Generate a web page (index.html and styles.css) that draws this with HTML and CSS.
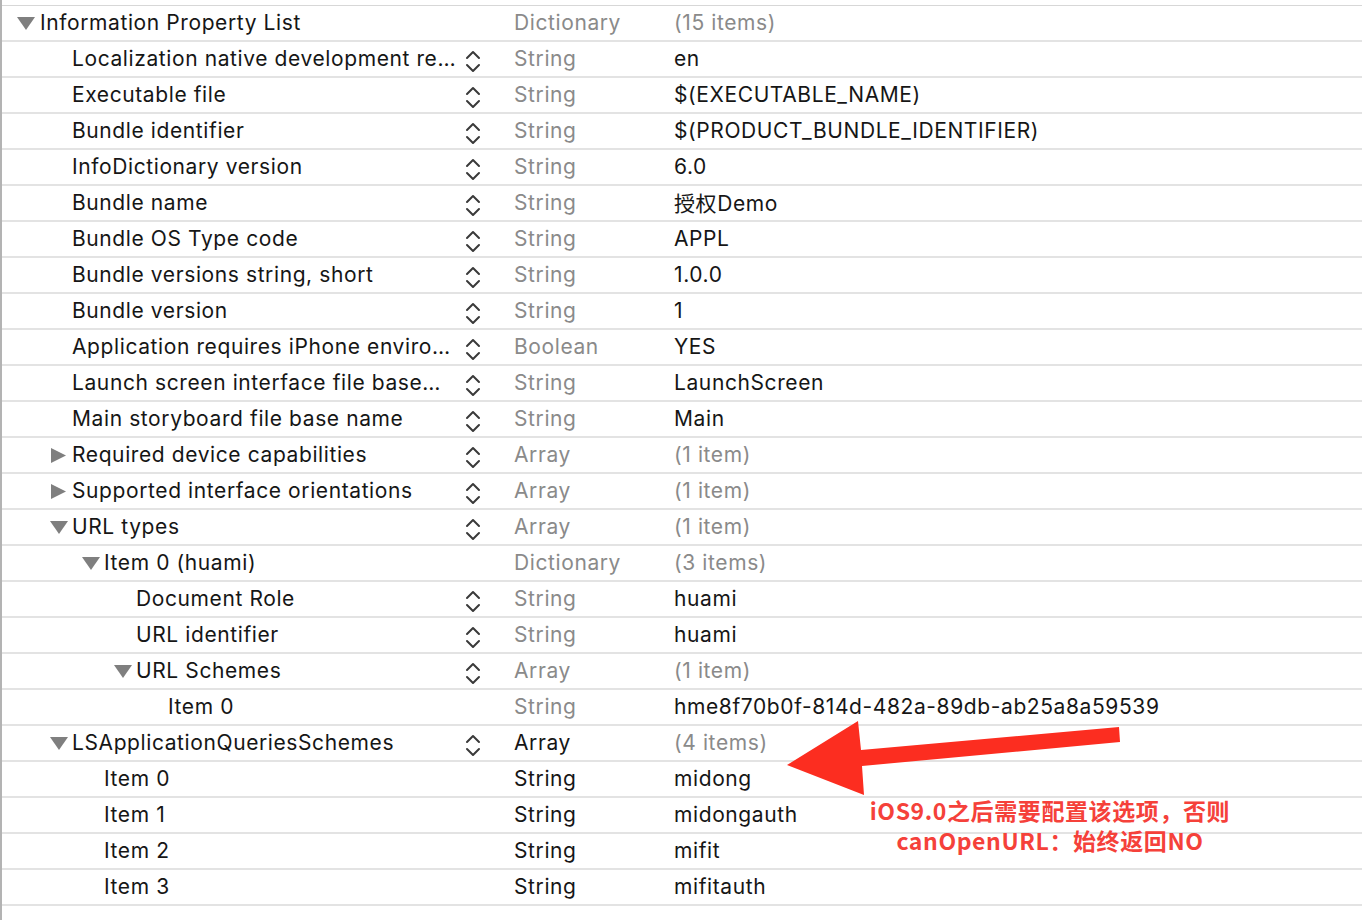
FILE: index.html
```html
<!DOCTYPE html>
<html lang="zh-CN">
<head>
<meta charset="utf-8">
<title>Info.plist</title>
<link rel="stylesheet" href="styles.css">
</head>
<body>
<div class="page">
  <div class="plist">
    <div class="row first">
      <div class="key l0"><span class="tw"><svg class="tri" viewBox="0 0 32 34"><polygon points="9,11 27,11 18,24"/></svg></span><span class="name">Information Property List</span><span class="step"></span></div>
      <div class="type">Dictionary</div><div class="val dim">(15 items)</div>
    </div>
    <div class="row">
      <div class="key l1"><span class="tw"></span><span class="name">Localization native development re…</span><span class="step"><svg viewBox="0 0 16 24"><polyline points="2,8 8,2 14,8"/><polyline points="2,15 8,21 14,15"/></svg></span></div>
      <div class="type">String</div><div class="val">en</div>
    </div>
    <div class="row">
      <div class="key l1"><span class="tw"></span><span class="name">Executable file</span><span class="step"><svg viewBox="0 0 16 24"><polyline points="2,8 8,2 14,8"/><polyline points="2,15 8,21 14,15"/></svg></span></div>
      <div class="type">String</div><div class="val">$(EXECUTABLE_NAME)</div>
    </div>
    <div class="row">
      <div class="key l1"><span class="tw"></span><span class="name">Bundle identifier</span><span class="step"><svg viewBox="0 0 16 24"><polyline points="2,8 8,2 14,8"/><polyline points="2,15 8,21 14,15"/></svg></span></div>
      <div class="type">String</div><div class="val">$(PRODUCT_BUNDLE_IDENTIFIER)</div>
    </div>
    <div class="row">
      <div class="key l1"><span class="tw"></span><span class="name">InfoDictionary version</span><span class="step"><svg viewBox="0 0 16 24"><polyline points="2,8 8,2 14,8"/><polyline points="2,15 8,21 14,15"/></svg></span></div>
      <div class="type">String</div><div class="val">6.0</div>
    </div>
    <div class="row">
      <div class="key l1"><span class="tw"></span><span class="name">Bundle name</span><span class="step"><svg viewBox="0 0 16 24"><polyline points="2,8 8,2 14,8"/><polyline points="2,15 8,21 14,15"/></svg></span></div>
      <div class="type">String</div><div class="val">授权Demo</div>
    </div>
    <div class="row">
      <div class="key l1"><span class="tw"></span><span class="name">Bundle OS Type code</span><span class="step"><svg viewBox="0 0 16 24"><polyline points="2,8 8,2 14,8"/><polyline points="2,15 8,21 14,15"/></svg></span></div>
      <div class="type">String</div><div class="val">APPL</div>
    </div>
    <div class="row">
      <div class="key l1"><span class="tw"></span><span class="name">Bundle versions string, short</span><span class="step"><svg viewBox="0 0 16 24"><polyline points="2,8 8,2 14,8"/><polyline points="2,15 8,21 14,15"/></svg></span></div>
      <div class="type">String</div><div class="val">1.0.0</div>
    </div>
    <div class="row">
      <div class="key l1"><span class="tw"></span><span class="name">Bundle version</span><span class="step"><svg viewBox="0 0 16 24"><polyline points="2,8 8,2 14,8"/><polyline points="2,15 8,21 14,15"/></svg></span></div>
      <div class="type">String</div><div class="val">1</div>
    </div>
    <div class="row">
      <div class="key l1"><span class="tw"></span><span class="name">Application requires iPhone enviro…</span><span class="step"><svg viewBox="0 0 16 24"><polyline points="2,8 8,2 14,8"/><polyline points="2,15 8,21 14,15"/></svg></span></div>
      <div class="type">Boolean</div><div class="val">YES</div>
    </div>
    <div class="row">
      <div class="key l1"><span class="tw"></span><span class="name">Launch screen interface file base…</span><span class="step"><svg viewBox="0 0 16 24"><polyline points="2,8 8,2 14,8"/><polyline points="2,15 8,21 14,15"/></svg></span></div>
      <div class="type">String</div><div class="val">LaunchScreen</div>
    </div>
    <div class="row">
      <div class="key l1"><span class="tw"></span><span class="name">Main storyboard file base name</span><span class="step"><svg viewBox="0 0 16 24"><polyline points="2,8 8,2 14,8"/><polyline points="2,15 8,21 14,15"/></svg></span></div>
      <div class="type">String</div><div class="val">Main</div>
    </div>
    <div class="row">
      <div class="key l1"><span class="tw"><svg class="tri" viewBox="0 0 32 34"><polygon points="11,10 26,17.5 11,25"/></svg></span><span class="name">Required device capabilities</span><span class="step"><svg viewBox="0 0 16 24"><polyline points="2,8 8,2 14,8"/><polyline points="2,15 8,21 14,15"/></svg></span></div>
      <div class="type">Array</div><div class="val dim">(1 item)</div>
    </div>
    <div class="row">
      <div class="key l1"><span class="tw"><svg class="tri" viewBox="0 0 32 34"><polygon points="11,10 26,17.5 11,25"/></svg></span><span class="name">Supported interface orientations</span><span class="step"><svg viewBox="0 0 16 24"><polyline points="2,8 8,2 14,8"/><polyline points="2,15 8,21 14,15"/></svg></span></div>
      <div class="type">Array</div><div class="val dim">(1 item)</div>
    </div>
    <div class="row">
      <div class="key l1"><span class="tw"><svg class="tri" viewBox="0 0 32 34"><polygon points="10,11 28,11 19,24"/></svg></span><span class="name">URL types</span><span class="step"><svg viewBox="0 0 16 24"><polyline points="2,8 8,2 14,8"/><polyline points="2,15 8,21 14,15"/></svg></span></div>
      <div class="type">Array</div><div class="val dim">(1 item)</div>
    </div>
    <div class="row">
      <div class="key l2"><span class="tw"><svg class="tri" viewBox="0 0 32 34"><polygon points="10,11 28,11 19,24"/></svg></span><span class="name">Item 0 (huami)</span><span class="step"></span></div>
      <div class="type">Dictionary</div><div class="val dim">(3 items)</div>
    </div>
    <div class="row">
      <div class="key l3"><span class="tw"></span><span class="name">Document Role</span><span class="step"><svg viewBox="0 0 16 24"><polyline points="2,8 8,2 14,8"/><polyline points="2,15 8,21 14,15"/></svg></span></div>
      <div class="type">String</div><div class="val">huami</div>
    </div>
    <div class="row">
      <div class="key l3"><span class="tw"></span><span class="name">URL identifier</span><span class="step"><svg viewBox="0 0 16 24"><polyline points="2,8 8,2 14,8"/><polyline points="2,15 8,21 14,15"/></svg></span></div>
      <div class="type">String</div><div class="val">huami</div>
    </div>
    <div class="row">
      <div class="key l3"><span class="tw"><svg class="tri" viewBox="0 0 32 34"><polygon points="10,11 28,11 19,24"/></svg></span><span class="name">URL Schemes</span><span class="step"><svg viewBox="0 0 16 24"><polyline points="2,8 8,2 14,8"/><polyline points="2,15 8,21 14,15"/></svg></span></div>
      <div class="type">Array</div><div class="val dim">(1 item)</div>
    </div>
    <div class="row">
      <div class="key l4"><span class="tw"></span><span class="name">Item 0</span><span class="step"></span></div>
      <div class="type">String</div><div class="val">hme8f70b0f-814d-482a-89db-ab25a8a59539</div>
    </div>
    <div class="row">
      <div class="key l1"><span class="tw"><svg class="tri" viewBox="0 0 32 34"><polygon points="10,11 28,11 19,24"/></svg></span><span class="name">LSApplicationQueriesSchemes</span><span class="step"><svg viewBox="0 0 16 24"><polyline points="2,8 8,2 14,8"/><polyline points="2,15 8,21 14,15"/></svg></span></div>
      <div class="type dark">Array</div><div class="val dim">(4 items)</div>
    </div>
    <div class="row">
      <div class="key l2"><span class="tw"></span><span class="name">Item 0</span><span class="step"></span></div>
      <div class="type dark">String</div><div class="val">midong</div>
    </div>
    <div class="row">
      <div class="key l2"><span class="tw"></span><span class="name">Item 1</span><span class="step"></span></div>
      <div class="type dark">String</div><div class="val">midongauth</div>
    </div>
    <div class="row">
      <div class="key l2"><span class="tw"></span><span class="name">Item 2</span><span class="step"></span></div>
      <div class="type dark">String</div><div class="val">mifit</div>
    </div>
    <div class="row">
      <div class="key l2"><span class="tw"></span><span class="name">Item 3</span><span class="step"></span></div>
      <div class="type dark">String</div><div class="val">mifitauth</div>
    </div>
  </div>

  <svg class="arrow" viewBox="0 0 1362 920" width="1362" height="920">
    <polygon points="785,765 856,721 859,750 1117,727 1118,742 860,766 862,795"/>
  </svg>
  <div class="note">
    <div class="note-line">iOS9.0之后需要配置该选项，否则</div>
    <div class="note-line">canOpenURL：始终返回NO</div>
  </div>
</div>
</body>
</html>
```

FILE: styles.css
```css
html, body {
  margin: 0;
  padding: 0;
  background: #ffffff;
}

body {
  font-family: "Inter", "Noto Sans CJK SC", sans-serif;
  font-size: 21px;
  letter-spacing: 0.6px;
  color: #161616;
}

.page {
  position: relative;
  width: 1362px;
  height: 920px;
  box-sizing: border-box;
  border-left: 2px solid #b3b3b3;
  padding-top: 5px;
  overflow: hidden;
}

.plist {
  margin-left: -2px;
  border-top: 1px solid #d7d7d7;
}

.row {
  display: grid;
  grid-template-columns: 514px 160px 1fr;
  align-items: center;
  height: 34px;
  border-bottom: 2px solid #e3e3e3;
  white-space: nowrap;
}

.key {
  display: flex;
  align-items: center;
  height: 34px;
  min-width: 0;
}

.l0 { padding-left: 8px; }
.l1 { padding-left: 40px; }
.l2 { padding-left: 72px; }
.l3 { padding-left: 104px; }
.l4 { padding-left: 136px; }

.tw {
  flex: 0 0 32px;
  width: 32px;
  height: 34px;
}

.tri {
  display: block;
  width: 32px;
  height: 34px;
  fill: #7f7f7f;
}

.name {
  flex: 1;
  min-width: 0;
  overflow: hidden;
  margin-bottom: 2px;
}

.step {
  flex: 0 0 16px;
  width: 16px;
  height: 24px;
  margin-right: 33px;
  margin-left: 8px;
  margin-top: 6px;
}

.step svg {
  display: block;
  width: 16px;
  height: 24px;
  fill: none;
  stroke: #3a3a3a;
  stroke-width: 2;
  stroke-linecap: round;
  stroke-linejoin: round;
}

.type {
  color: #8a8a8a;
  margin-bottom: 2px;
}

.type.dark {
  color: #161616;
}

.val {
  overflow: hidden;
  margin-bottom: 2px;
}

.val.dim {
  color: #8a8a8a;
}

.arrow {
  position: absolute;
  left: 0;
  top: 0;
  pointer-events: none;
}

.arrow polygon {
  fill: #fc2d20;
}

.note {
  position: absolute;
  left: 848px;
  top: 797px;
  width: 400px;
  display: flex;
  flex-direction: column;
  align-items: center;
  gap: 3px;
  font-family: "Noto Sans CJK SC", sans-serif;
  font-weight: 700;
  font-size: 23px;
  letter-spacing: 0.6px;
  line-height: 27px;
  color: #f5413a;
}
```
